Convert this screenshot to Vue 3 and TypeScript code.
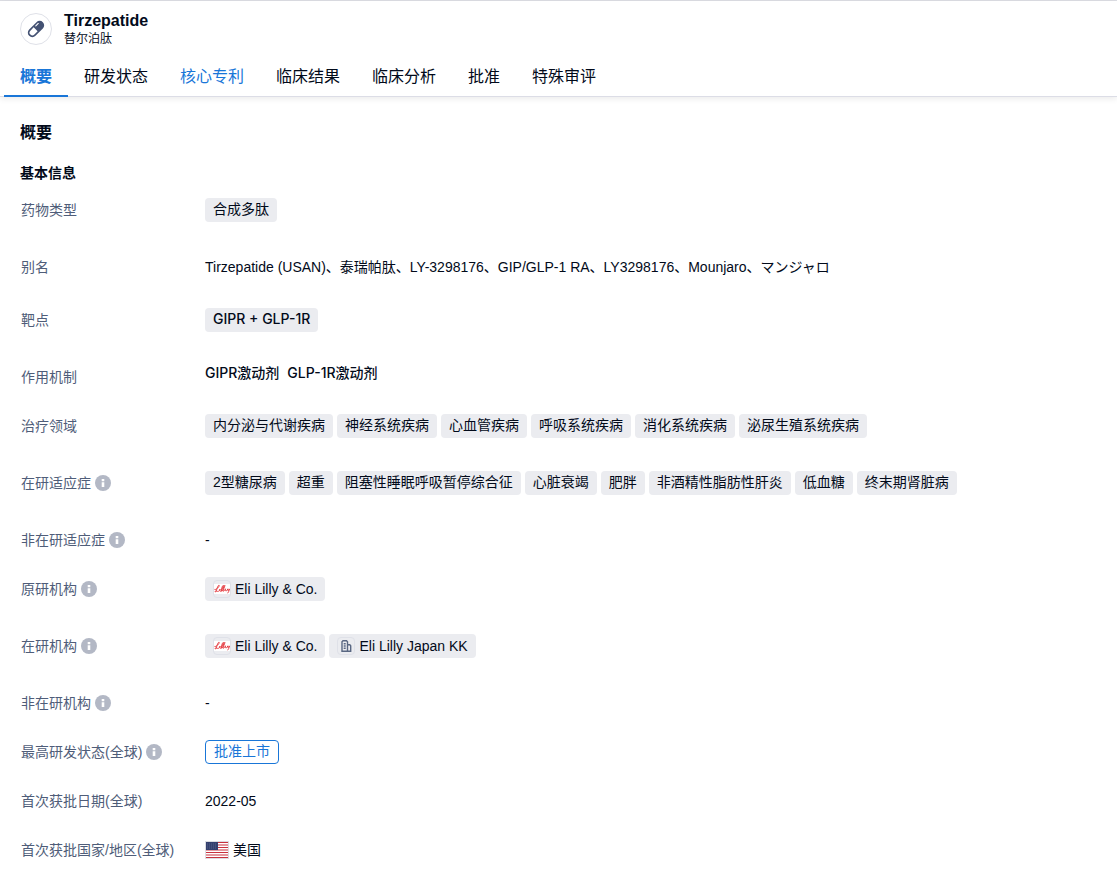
<script setup lang="ts">
interface Tab {
  label: string
  active?: boolean
  linked?: boolean
}

interface Organisation {
  name: string
  logo: 'lilly' | 'building'
}

interface Row {
  label: string
  info?: boolean
  kind: 'tags' | 'target' | 'text' | 'aliases' | 'phrases' | 'orgs' | 'status' | 'country'
  values?: string[]
  orgs?: Organisation[]
}

const tabs: Tab[] = [
  { label: '概要', active: true },
  { label: '研发状态' },
  { label: '核心专利', linked: true },
  { label: '临床结果' },
  { label: '临床分析' },
  { label: '批准' },
  { label: '特殊审评' },
]

const lilly: Organisation = { name: 'Eli Lilly & Co.', logo: 'lilly' }
const lillyJapan: Organisation = { name: 'Eli Lilly Japan KK', logo: 'building' }

const rows: Row[] = [
  { label: '药物类型', kind: 'tags', values: ['合成多肽'] },
  {
    label: '别名',
    kind: 'aliases',
    values: ['Tirzepatide (USAN)', '泰瑞帕肽', 'LY-3298176', 'GIP/GLP-1 RA', 'LY3298176', 'Mounjaro', 'マンジャロ'],
  },
  { label: '靶点', kind: 'target', values: ['GIPR + GLP-1R'] },
  { label: '作用机制', kind: 'phrases', values: ['GIPR激动剂', 'GLP-1R激动剂'] },
  {
    label: '治疗领域',
    kind: 'tags',
    values: ['内分泌与代谢疾病', '神经系统疾病', '心血管疾病', '呼吸系统疾病', '消化系统疾病', '泌尿生殖系统疾病'],
  },
  {
    label: '在研适应症',
    info: true,
    kind: 'tags',
    values: ['2型糖尿病', '超重', '阻塞性睡眠呼吸暂停综合征', '心脏衰竭', '肥胖', '非酒精性脂肪性肝炎', '低血糖', '终末期肾脏病'],
  },
  { label: '非在研适应症', info: true, kind: 'text', values: ['-'] },
  { label: '原研机构', info: true, kind: 'orgs', orgs: [lilly] },
  { label: '在研机构', info: true, kind: 'orgs', orgs: [lilly, lillyJapan] },
  { label: '非在研机构', info: true, kind: 'text', values: ['-'] },
  { label: '最高研发状态(全球)', info: true, kind: 'status', values: ['批准上市'] },
  { label: '首次获批日期(全球)', kind: 'text', values: ['2022-05'] },
  { label: '首次获批国家/地区(全球)', kind: 'country', values: ['美国'] },
]
</script>

<template>
  <div class="page">
    <header class="header">
      <div class="drug">
        <span class="drug-icon">
          <svg width="20" height="20" viewBox="0 0 20 20" aria-hidden="true">
            <g transform="rotate(-45 10 10)">
              <rect x="0.3" y="5.500" width="19.400" height="9" rx="4.500" fill="#445273" />
              <path d="M9.500 7.200H4.900a2.800 2.800 0 0 0 0 5.600h4.600z" fill="#fff" />
              <path d="M12 7.700h3.500" stroke="#fff" stroke-width="1.100" stroke-linecap="round" />
            </g>
          </svg>
        </span>
        <div class="drug-names">
          <h1 class="drug-name">Tirzepatide</h1>
          <p class="drug-local">替尔泊肽</p>
        </div>
      </div>
      <nav class="tabs">
        <a
          v-for="tab in tabs"
          :key="tab.label"
          href="#"
          class="tab"
          :class="{ 'tab-active': tab.active, 'tab-linked': tab.linked }"
          @click.prevent
        >{{ tab.label }}</a>
      </nav>
    </header>

    <main class="content">
      <h2 class="section-title">概要</h2>
      <h3 class="group-title">基本信息</h3>
      <dl class="rows">
        <div v-for="row in rows" :key="row.label" class="row" :class="'row-' + row.kind">
          <dt class="label">
            <span>{{ row.label }}</span>
            <svg v-if="row.info" class="info" width="16" height="16" viewBox="0 0 16 16" aria-hidden="true">
              <circle cx="8" cy="8" r="8" fill="#b3b8c5" />
              <path d="M6.700 4h2.600v2.200H6.700zM6.700 7.300h2.600V12H6.700z" fill="#fff" />
            </svg>
          </dt>
          <dd class="value">
            <template v-if="row.kind === 'tags' || row.kind === 'target'">
              <span v-for="value in row.values" :key="value" class="tag">{{ value }}</span>
            </template>
            <template v-else-if="row.kind === 'aliases'">{{ row.values?.join('、') }}</template>
            <template v-else-if="row.kind === 'phrases'">
              <span v-for="value in row.values" :key="value">{{ value }}</span>
            </template>
            <template v-else-if="row.kind === 'orgs'">
              <span v-for="org in row.orgs" :key="org.name" class="tag tag-org">
                <span class="logo">
                  <svg v-if="org.logo === 'lilly'" width="16" height="16" viewBox="0 0 16 16" aria-hidden="true">
                    <rect y="3" width="16" height="10" fill="#fff" />
                    <path
                      d="M.8 8.600C2 9.200 5.600 5.600 5.200 4.300 4 3.800 3 7.500 2.200 10.300 1.400 11.300.6 10.600 1.300 10c1.300-.2 2 .8 3.300.2.900-.5 1.200-1.300 1.500-2.200-.4 1.300-.5 2.400.2 2.300C7.600 9.800 9.300 6 9.400 4.300 8 4.800 7.200 8.800 7.600 10.300c1.400-.4 3.200-4.300 3.300-6-1.500.6-2.100 4.500-1.800 5.900 1 0 2-1.300 2.400-2.400-.3 1.500 0 2.300.7 2.100.8-.3 1.300-1.200 1.700-2.100-.3 1.200-.3 1.900.2 1.800.6-.2 1-.9 1.400-1.700-.4 1.600-.8 3.300-1.600 4.100"
                      fill="none" stroke="#e3343a" stroke-width="0.900" stroke-linejoin="round" stroke-linecap="round"
                    />
                  </svg>
                  <svg v-else width="16" height="16" viewBox="0 0 16 16" aria-hidden="true">
                    <path
                      d="M4 13.300V3.800l1-1h3.500l1 1v9.500M9.500 6.800h2.300l.9.900v5.600M3.300 13.300h10.100M5.700 5.700h2M5.700 8h2M5.700 10.300h2"
                      fill="none" stroke="#596782" stroke-width="1.400"
                    />
                  </svg>
                </span>
                {{ org.name }}
              </span>
            </template>
            <span v-else-if="row.kind === 'status'" class="status">{{ row.values?.[0] }}</span>
            <template v-else-if="row.kind === 'country'">
              <svg class="flag" width="24" height="18" viewBox="0 0 24 18" aria-hidden="true">
                <rect width="24" height="18" fill="#dcdde2" />
                <rect x="1" y="1" width="22" height="16" fill="#fff" />
                <path
                  d="M1 1.500h22M1 4h22M1 6.500h22M1 9h22M1 11.500h22M1 14h22M1 16.500h22"
                  stroke="#c8323f" stroke-width="1.200"
                />
                <rect x="1" y="1" width="12" height="8" fill="#34406e" />
                <path d="M2 3h10M2 5h10M2 7h10" stroke="#6d769b" stroke-width="0.600" stroke-dasharray="1 1" />
              </svg>
              <span>{{ row.values?.[0] }}</span>
            </template>
            <template v-else>{{ row.values?.[0] }}</template>
          </dd>
        </div>
      </dl>
    </main>
  </div>
</template>

<style>
body {
  margin: 0;
  background: #fff;
}
</style>

<style scoped>
.page {
  border-top: 1px solid #dcdde3;
  font-family: "Liberation Sans", Arial, "Noto Sans CJK SC", sans-serif;
  font-size: 14px;
  line-height: 24px;
  color: #020a1a;
}

.header {
  border-bottom: 1px solid #dcdde6;
  box-shadow: 0 2px 6px rgba(0, 0, 0, 0.08);
}

.drug {
  display: flex;
  align-items: center;
  gap: 12px;
  height: 56px;
  padding: 0 20px;
}

.drug-icon {
  display: flex;
  align-items: center;
  justify-content: center;
  box-sizing: border-box;
  width: 32px;
  height: 32px;
  border: 1px solid #dfe1e8;
  border-radius: 50%;
}

.drug-name {
  margin: 0;
  font-size: 16px;
  line-height: 20px;
  font-weight: 700;
}

.drug-local {
  margin: 0;
  font-size: 12px;
  line-height: 16px;
}

.tabs {
  display: flex;
  padding: 0 4px;
  margin-bottom: -1px;
}

.tab {
  box-sizing: border-box;
  height: 40px;
  padding: 0 16px;
  border-bottom: 2px solid transparent;
  font-size: 16px;
  line-height: 40px;
  color: #020a1a;
  text-decoration: none;
}

.tab-active {
  border-bottom-color: #1976d8;
  font-weight: 700;
}

.tab-active,
.tab-linked {
  color: #1976d8;
}

.content {
  padding: 24px 20px 0;
}

.section-title {
  margin: 0;
  font-size: 16px;
  line-height: 24px;
}

.group-title {
  margin: 16px 0 0;
  font-size: 14px;
  line-height: 24px;
}

.rows {
  margin: 13px 0 0;
}

.row {
  display: grid;
  grid-template-columns: 185px 1fr;
  min-height: 24px;
  padding-bottom: 25px;
}

.row-tags,
.row-target,
.row-orgs {
  padding-bottom: 33px;
}

.row-aliases {
  padding-bottom: 29px;
}

.label {
  display: flex;
  align-items: center;
  gap: 4px;
  height: 24px;
  padding-left: 1px;
  color: #4f5d79;
  white-space: nowrap;
}

.info {
  flex: none;
}

.value {
  display: flex;
  flex-wrap: wrap;
  align-items: center;
  gap: 4px;
  min-height: 24px;
  margin: 0;
}

.row-phrases .value {
  align-items: flex-start;
  gap: 8px;
  min-height: 16px;
  line-height: 16px;
}

.row-phrases .value,
.row-target .value {
  font-family: Inter, "Noto Sans CJK SC", sans-serif;
  font-weight: 500;
}

.tag {
  box-sizing: border-box;
  height: 24px;
  padding: 0 8px;
  border-radius: 4px;
  background: #ebecf0;
  line-height: 22px;
  white-space: nowrap;
}

.tag-org {
  display: flex;
  align-items: center;
  gap: 4px;
}

.logo {
  display: flex;
  box-sizing: border-box;
  width: 18px;
  height: 18px;
  border: 1px solid #dfe1e8;
  border-radius: 4px;
  overflow: hidden;
}

.status {
  box-sizing: border-box;
  height: 24px;
  padding: 0 8px;
  border: 1px solid #1976d8;
  border-radius: 4px;
  line-height: 20px;
  color: #1976d8;
}
</style>
